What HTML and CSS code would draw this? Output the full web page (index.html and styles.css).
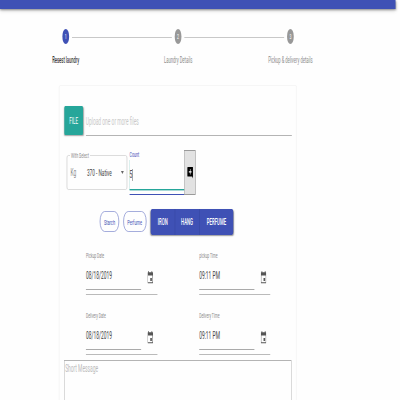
FILE: index.html
```
<!DOCTYPE html>
<html lang="en">
<head>
<meta charset="utf-8">
<title>Laundry</title>
<link rel="stylesheet" href="styles.css">
</head>
<body>
<svg width="0" height="0" class="defs">
  <symbol id="calendar" viewBox="3 1 18 20" preserveAspectRatio="none"><path d="M17 12h-5v5h5v-5zM16 1v2H8V1H6v2H5c-1.11 0-2 .9-2 2v14c0 1.1.89 2 2 2h14c1.1 0 2-.9 2-2V5c0-1.1-.9-2-2-2h-1V1h-2zm3 18H5V8h14v11z"/></symbol>
</svg>
<div class="frame">
<div class="page">
  <header class="appbar"></header>
  <nav class="stepper">
    <div class="step active"><span class="dot">1</span><span class="name">Resest laundry</span></div>
    <div class="step"><span class="dot">2</span><span class="name">Laundry Details</span></div>
    <div class="step"><span class="dot">3</span><span class="name">Pickup &amp; delivery details</span></div>
  </nav>
  <main class="card">
    <div class="upload">
      <button class="file">FILE</button>
      <div class="path">Upload one or more files</div>
    </div>
    <div class="weight">
      <fieldset class="select">
        <legend>With Select</legend>
        <div class="choice"><span class="unit">Kg</span><span>370 - Native</span><i class="arrow"></i></div>
      </fieldset>
      <div class="count">
        <label>Count</label>
        <div class="entry">5<i class="caret"></i></div>
      </div>
      <button class="add"><svg viewBox="0 0 22 20" preserveAspectRatio="none"><path d="M2 0h18q2 0 2 2v18l-4-4H2q-2 0-2-2V2q0-2 2-2z"/><path d="M11 3.5v9M6 8h10" stroke="#fff" stroke-width="2"/></svg></button>
    </div>
    <div class="services">
      <span class="chip starch">Starch</span>
      <span class="chip perfume">Perfume</span>
      <div class="group"><button>IRON</button><button>HANG</button><button>PERFUME</button></div>
    </div>
    <div class="dates">
      <div class="field"><label>Pickup Date</label><div class="value">08/18/2019</div><svg><use href="#calendar"/></svg></div>
      <div class="field"><label>pickup Time</label><div class="value">09:11 PM</div><svg><use href="#calendar"/></svg></div>
      <div class="field"><label>Delivery Date</label><div class="value">08/18/2019</div><svg><use href="#calendar"/></svg></div>
      <div class="field"><label>Delivery Time</label><div class="value">09:11 PM</div><svg><use href="#calendar"/></svg></div>
    </div>
    <div class="message">Short Message</div>
  </main>
</div>
</div>
</body>
</html>
```
FILE: styles.css
```
/* The page is condensed horizontally; --u is one on-screen pixel of width. */
:root { --u: calc(1px / 0.48); }
* { box-sizing: border-box; }
html, body { margin: 0; width: 400px; height: 400px; overflow: hidden; background: #fefefe; }
.defs { display: block; }
.frame { width: 400px; height: 400px; overflow: hidden; }
.page {
  width: calc(399 * var(--u));
  height: 400px;
  overflow: hidden;
  transform: scaleX(0.48);
  transform-origin: 0 0;
  font-family: Roboto, sans-serif;
  color: #444;
}
button { font-family: inherit; border: 0; padding: 0; margin: 0; }
.appbar {
  height: 9px;
  width: calc(395.5 * var(--u));
  background: #3f51b5;
  box-shadow: 0 1px 3px rgba(0, 0, 0, .4), 0 2px 6px rgba(0, 0, 0, .12);
}
.stepper {
  display: flex;
  width: calc(337 * var(--u));
  margin-left: calc(9.6 * var(--u));
  padding-top: 20px;
  height: 76px;
}
.step {
  flex: 1;
  position: relative;
  display: flex;
  flex-direction: column;
  align-items: center;
  font-size: 8.6px;
  color: #8a8a8a;
}
.step + .step::before {
  content: "";
  position: absolute;
  top: 8px;
  height: 1px;
  left: calc(-50% + 6.2 * var(--u));
  right: calc(50% + 6.2 * var(--u));
  background: #c8c8c8;
}
.dot {
  width: calc(7 * var(--u));
  height: 15px;
  border-radius: 50%;
  background: #989898;
  color: #fff;
  font-size: 7.3px;
  line-height: 15px;
  text-align: center;
}
.name { margin-top: 11px; line-height: 10px; white-space: nowrap; }
.active .dot { background: #3f51b5; }
.active .name { color: #3a3a3a; font-weight: 500; letter-spacing: -.05px; }
.card {
  width: calc(237.5 * var(--u));
  height: 330px;
  margin-left: calc(59.2 * var(--u));
  padding: 20px calc(4.5 * var(--u)) 0;
  border: 1px solid #f3f3f3;
  border-radius: 2px;
}
.upload { display: flex; height: 29.5px; }
.file {
  width: calc(19 * var(--u));
  height: 29px;
  border-radius: 2px;
  background: #26a69a;
  color: #fff;
  font-size: 9.6px;
  box-shadow: 0 1px 2px rgba(0, 0, 0, .35);
}
.path {
  flex: 1;
  margin-left: calc(2.6 * var(--u));
  border-bottom: 1px solid #b4b4b4;
  color: #c8c8c8;
  font-size: 10.2px;
  line-height: 32px;
}
.weight { display: flex; margin: 14px 0 0 calc(2.7 * var(--u)); height: 46px; }
.select {
  width: calc(60.5 * var(--u));
  height: 38px;
  margin: 2px 0 0;
  padding: 0 calc(3.2 * var(--u));
  border: 1px solid #d0d0d0;
  border-radius: 3px;
}
.select legend { padding: 0 2px; margin-left: -1px; font-size: 7.4px; line-height: 8px; color: #888; }
.choice { display: flex; align-items: center; font-size: 9.8px; height: 25px; }
.unit { width: calc(16.4 * var(--u)); color: #888; font-size: 10px; }
.arrow {
  margin-left: auto;
  border: solid transparent;
  border-width: 3px 3px 0;
  border-top-color: #666;
}
.count {
  width: calc(55 * var(--u));
  height: 45px;
  margin-left: calc(2.2 * var(--u));
  padding-top: 1.5px;
  border-bottom: 1px solid #3f51b5;
}
.count label { display: block; font-size: 7.5px; line-height: 8px; color: #3f51b5; }
.entry {
  display: flex;
  align-items: center;
  height: 31px;
  padding-top: 1px;
  border-bottom: 1px solid #26a69a;
  box-shadow: 0 1px 0 rgba(38, 166, 154, .4);
  font-size: 10.2px;
}
.caret { width: 1.5px; height: 12px; background: #555; }
.add {
  width: calc(11.8 * var(--u));
  height: 45px;
  padding-top: 1px;
  margin-left: calc(-.4 * var(--u));
  background: #e2e2e2;
  border: 1px solid #9a9a9a;
}
.add svg { display: block; margin: 0 auto; width: calc(6 * var(--u)); height: 12px; }
.services { display: flex; align-items: center; height: 26px; margin: 13px 0 0 calc(35.8 * var(--u)); }
.chip {
  height: 21px;
  border: 1px solid #8590d0;
  border-radius: 10px;
  color: #3f51b5;
  font-size: 8.1px;
  line-height: 20px;
  text-align: center;
}
.starch { width: calc(19 * var(--u)); }
.perfume { width: calc(23 * var(--u)); margin: 0 calc(4.7 * var(--u)) 0 calc(4.2 * var(--u)); }
.group {
  display: flex;
  height: 26px;
  border-radius: 3px;
  background: #3f51b5;
  box-shadow: 0 1px 2px rgba(0, 0, 0, .4);
}
.group button {
  width: calc(24.3 * var(--u));
  background: none;
  border-right: 1px solid #3545a0;
  color: #fff;
  font-size: 8.8px;
  font-weight: 500;
  letter-spacing: .1px;
}
.group button:last-child { width: calc(34 * var(--u)); border: 0; }
.dates {
  display: grid;
  grid-template-columns: calc(113.2 * var(--u)) calc(71 * var(--u));
  grid-auto-rows: 60px;
  margin: 16.5px 0 0 calc(21.8 * var(--u));
}
.field {
  display: grid;
  grid-template-columns: calc(55.3 * var(--u)) 1fr;
  grid-template-rows: 9px 30px;
  width: calc(71.3 * var(--u));
  height: 44px;
  border-bottom: 1px solid #bababa;
}
.field label { grid-column: 1 / 3; font-size: 7.1px; line-height: 9px; color: #888; }
.value { border-bottom: 1px solid #aaa; font-size: 10.2px; line-height: 32px; height: 30px; }
.field svg { width: calc(5.8 * var(--u)); height: 12.5px; margin: 11px 0 0 calc(6 * var(--u)); fill: #555; }
.message {
  height: 80px;
  margin-top: -11px;
  border: 1px solid #b4b4b4;
  padding: 2px 1px;
  color: #bbb;
  font-size: 10.2px;
  line-height: 12px;
}
```
